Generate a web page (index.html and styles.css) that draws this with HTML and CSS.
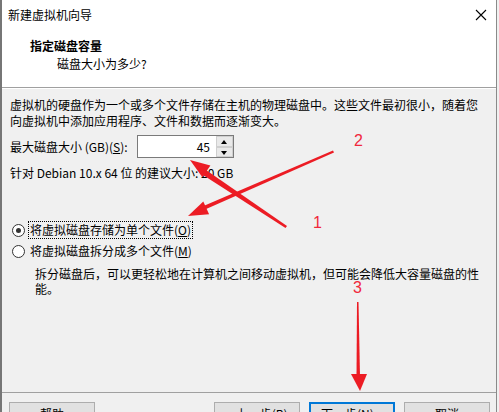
FILE: index.html
```html
<!DOCTYPE html>
<html lang="zh-CN">
<head>
    <meta charset="UTF-8">
    <meta name="viewport" content="width=device-width, initial-scale=1.0">
    <title>新建虚拟机向导</title>
    <link rel="stylesheet" href="styles.css">
</head>
<body>
    <div class="wizard">
        <div class="titlebar">
            <span class="title">新建虚拟机向导</span>
            <svg class="close" width="12" height="12" viewBox="0 0 12 12">
                <path d="M1 1L11 11M11 1L1 11" stroke="#000" stroke-width="1.1" fill="none"/>
            </svg>
        </div>
        <div class="header">
            <div class="step-title">指定磁盘容量</div>
            <div class="step-sub">磁盘大小为多少?</div>
        </div>
        <div class="content">
            <p class="intro">虚拟机的硬盘作为一个或多个文件存储在主机的物理磁盘中。这些文件最初很小，随着您向虚拟机中添加应用程序、文件和数据而逐渐变大。</p>
            <div class="size-row">
                <label class="size-label" for="diskSize">最大磁盘大小 (GB)(<u>S</u>):</label>
                <div class="spin">
                    <input type="text" id="diskSize" value="45">
                    <div class="spin-btns">
                        <span class="spin-btn up"></span>
                        <span class="spin-btn down"></span>
                    </div>
                </div>
            </div>
            <p class="hint">针对 Debian 10.x 64 位 的建议大小: 20 GB</p>
            <label class="radio first">
                <span class="radio-dot checked"></span>
                <span class="radio-text focused">将虚拟磁盘存储为单个文件(<u>O</u>)</span>
            </label>
            <label class="radio">
                <span class="radio-dot"></span>
                <span class="radio-text">将虚拟磁盘拆分成多个文件(<u>M</u>)</span>
            </label>
            <p class="radio-note">拆分磁盘后，可以更轻松地在计算机之间移动虚拟机，但可能会降低大容量磁盘的性能。</p>
        </div>
        <div class="footer">
            <button class="btn">帮助</button>
            <div class="nav">
                <button class="btn">&lt; 上一步(<u>B</u>)</button>
                <button class="btn default">下一步(<u>N</u>) &gt;</button>
                <button class="btn">取消</button>
            </div>
        </div>

        <!-- 标注箭头 -->
        <svg class="marks" width="499" height="412" viewBox="0 0 499 412">
            <g fill="#ec1c24" stroke="none">
                <polygon points="333,150.5 334,152.5 205,209.5 203.5,206"/>
                <polygon points="188,216 203.3,201.4 209.1,214.2"/>
                <polygon points="287,226 285.5,228 203,175 206,170"/>
                <polygon points="190,160 210.4,165.6 202.4,177.2"/>
                <polygon points="357,302 358.5,302 360,376 356.5,376"/>
                <polygon points="351,374 367,374 360,391"/>
            </g>
            <g class="mark-num">
                <text x="354" y="146">2</text>
                <text x="313" y="228">1</text>
                <text x="353" y="293">3</text>
            </g>
        </svg>
    </div>
</body>
</html>
```

FILE: styles.css
```css
body {
    margin: 0;
    background: #f0f0f0;
    font-family: "Noto Sans CJK SC", "Noto Sans", sans-serif;
    font-size: 12px;
    color: #000;
    overflow: hidden;
}
.wizard {
    position: relative;
    width: 494px;
    height: 440px;
    border-left: 2px solid #767676;
    border-right: 1px solid #8a8a8a;
    background: #f0f0f0;
}
.titlebar {
    height: 30px;
    display: flex;
    align-items: center;
    justify-content: space-between;
    padding: 0 9px 0 6px;
    background: #fff;
}
.title {
    line-height: 16px;
}
.close {
    display: block;
}
.header {
    height: 57px;
    padding-left: 28px;
    background: #fff;
    border-bottom: 1px solid #a0a0a0;
}
.step-title {
    font-weight: bold;
    line-height: 16px;
    padding-top: 8px;
}
.step-sub {
    line-height: 16px;
    padding-top: 2px;
    padding-left: 27px;
}
.content {
    height: 295px;
    padding: 8px 14px 0 8px;
    border-top: 1px solid #fff;
}
.intro {
    margin: 0;
    line-height: 16px;
}
.size-row {
    display: flex;
    align-items: center;
    margin-top: 6px;
}
.size-label {
    width: 127px;
    line-height: 16px;
}
.spin {
    display: flex;
    width: 95px;
    height: 21px;
    border: 1px solid #7a7a7a;
    background: #fff;
}
.spin input {
    width: 72px;
    border: none;
    outline: none;
    padding: 0 4px 0 0;
    margin: 0;
    text-align: right;
    font-family: inherit;
    font-size: 12px;
    background: #fff;
}
.spin-btns {
    display: flex;
    flex-direction: column;
    width: 17px;
    margin-left: auto;
}
.spin-btn {
    position: relative;
    flex: 1;
    background: #e9e9e9;
    border: 1px solid #cfcfcf;
}
.spin-btn::after {
    content: "";
    position: absolute;
    left: 4px;
    top: 3px;
    border-left: 3.5px solid transparent;
    border-right: 3.5px solid transparent;
}
.spin-btn.up::after {
    border-bottom: 4px solid #000;
}
.spin-btn.down::after {
    border-top: 4px solid #000;
}
.hint {
    margin: 7px 0 0;
    line-height: 16px;
}
.radio {
    display: flex;
    align-items: center;
    height: 18px;
    margin-top: 3px;
    padding-left: 2px;
}
.radio.first {
    margin-top: 40px;
}
.radio-dot {
    position: relative;
    width: 11px;
    height: 11px;
    border: 1px solid #333;
    border-radius: 50%;
    background: #fff;
}
.radio-dot.checked::after {
    content: "";
    position: absolute;
    left: 3px;
    top: 3px;
    width: 5px;
    height: 5px;
    border-radius: 50%;
    background: #333;
}
.radio-text {
    margin-left: 3px;
    padding: 0 1px;
    line-height: 16px;
    border: 1px dotted transparent;
}
.radio-text.focused {
    border-color: #000;
}
.radio-note {
    margin: 6px 0 0 25px;
    line-height: 15px;
}
.footer {
    display: flex;
    justify-content: space-between;
    padding: 9px 6px 0 7px;
    border-top: 1px solid #a0a0a0;
}
.nav {
    display: flex;
    gap: 9px;
}
.btn {
    width: 86px;
    height: 23px;
    padding: 0;
    border: 1px solid #adadad;
    background: #e1e1e1;
    font-family: inherit;
    font-size: 12px;
    color: #000;
}
.btn.default {
    border: 2px solid #0078d7;
}
.marks {
    position: absolute;
    left: -2px;
    top: 0;
    pointer-events: none;
}
.mark-num text {
    font-family: "Liberation Sans", sans-serif;
    font-size: 16px;
    fill: #f0283c;
}
```
